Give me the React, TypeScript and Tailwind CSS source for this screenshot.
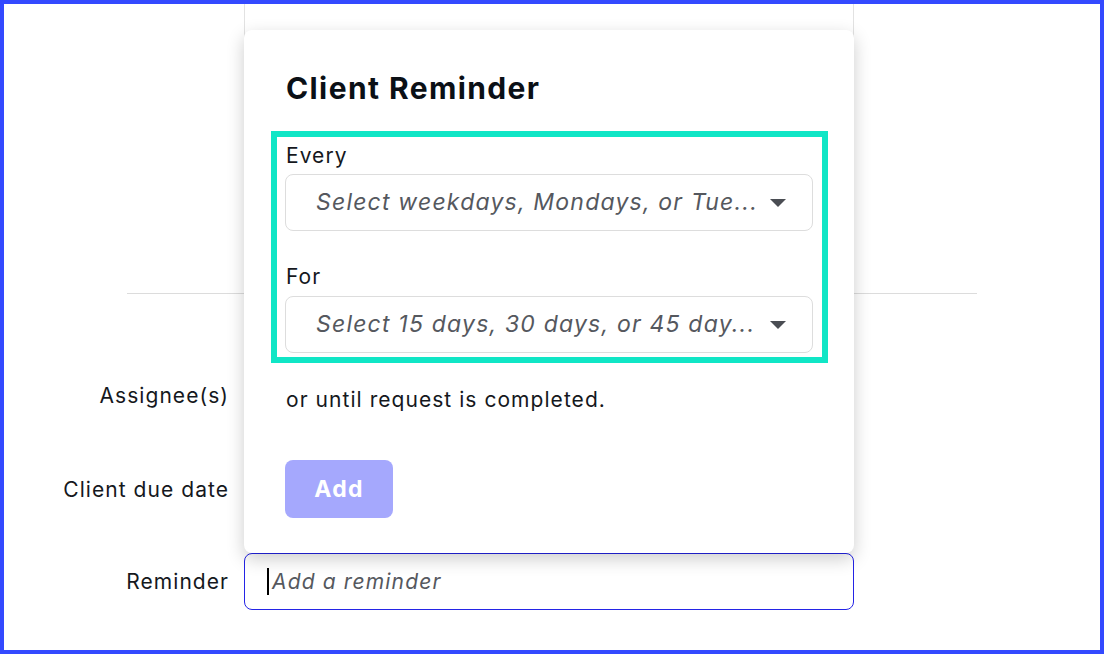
import React from "react";

function Caret() {
  return (
    <svg width="16" height="8" viewBox="0 0 16 8" className="shrink-0">
      <polygon points="0,0 16,0 8,8" fill="#4a4d53" />
    </svg>
  );
}

function SelectBox({ placeholder }: { placeholder: string }) {
  return (
    <div className="flex h-[57px] items-center justify-between rounded-lg border border-[#dddddd] bg-white pl-[30px] pr-[26px]">
      <span className="truncate text-[23px] italic tracking-[1.2px] text-[#55585e]">{placeholder}</span>
      <Caret />
    </div>
  );
}

function FormRow({ label, children, className }: { label: string; children?: React.ReactNode; className?: string }) {
  return (
    <div className={"flex items-center " + (className ?? "")}>
      <div className="w-[225px] text-right text-[21px] text-[#15181d]">{label}</div>
      <div className="ml-[15px] w-[610px]">{children}</div>
    </div>
  );
}

export default function App() {
  return (
    <div className="relative h-[654px] w-[1104px] overflow-hidden border-4 border-[#3349ff] bg-white font-['Inter',sans-serif] tracking-[1.05px]">
      {/* form behind the popover */}
      <div className="ml-[240px] h-[250px] w-[610px] border-x border-[#e2e2e2]" />
      <div className="ml-[123px] mt-[39px] h-px w-[850px] bg-[#dcdcdc]" />

      <FormRow label="Assignee(s)" className="mt-[73px] h-[57px]" />
      <FormRow label="Client due date" className="mt-[37px] h-[57px]" />
      <FormRow label="Reminder" className="mt-[35px] h-[57px]">
        <div className="flex h-[57px] items-center rounded-lg border border-[#2424e6] pl-[22px]">
          <span className="h-[27px] w-[2px] bg-black" />
          <span className="ml-[3px] text-[21px] italic tracking-[1.15px] text-[#55585e]">Add a reminder</span>
        </div>
      </FormRow>

      {/* popover */}
      <div className="absolute left-[240px] top-[26px] w-[610px] rounded-lg bg-white px-[27px] pb-[35px] pt-[40px] shadow-[0_6px_18px_rgba(0,0,0,0.2)]">
        <h2 className="ml-[15px] text-[30px] font-bold leading-[36px] tracking-[1.4px] text-[#0b1016]">Client Reminder</h2>

        <div className="mt-[25px] w-[557px] border-[6px] border-[#10e6c6] pb-[4px] pl-[8px] pr-[9px] pt-[7px]">
          <div className="ml-px text-[21px] leading-[24px] text-[#15181d]">Every</div>
          <div className="mt-[6px]">
            <SelectBox placeholder="Select weekdays, Mondays, or Tue..." />
          </div>
          <div className="ml-px mt-[34px] text-[21px] leading-[24px] text-[#15181d]">For</div>
          <div className="mt-[7px]">
            <SelectBox placeholder="Select 15 days, 30 days, or 45 day..." />
          </div>
        </div>

        <p className="ml-[15px] mt-[25px] text-[21px] leading-[24px] text-[#15181d]">or until request is completed.</p>

        <button className="ml-[14px] mt-[48px] flex h-[58px] w-[108px] items-center justify-center rounded-lg bg-[#a5a8fd] text-[23px] font-bold tracking-[1.3px] text-white">
          Add
        </button>
      </div>
    </div>
  );
}
